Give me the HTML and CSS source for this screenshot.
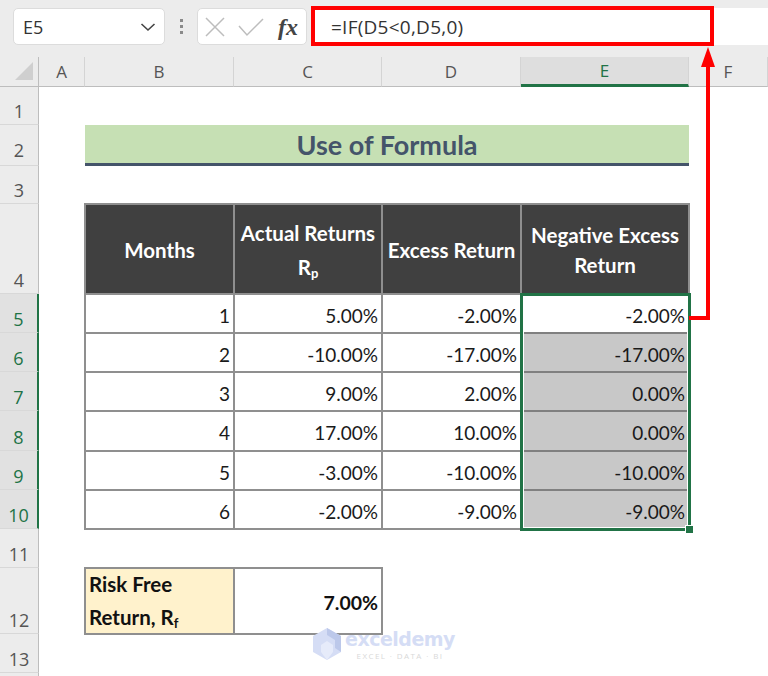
FILE: index.html
```html
<!DOCTYPE html>
<html lang="en">
<head>
<meta charset="utf-8">
<title>Use of Formula</title>
<link rel="stylesheet" href="styles.css">
</head>
<body>
<div class="page">
  <header class="formula-row">
    <div class="name-box"><span>E5</span>
      <svg class="chevron" width="16" height="10" viewBox="0 0 16 10"><path d="M1.5 2 L8 8 L14.5 2" fill="none" stroke="#444" stroke-width="1.6"/></svg>
    </div>
    <div class="dots"><i></i><i></i><i></i></div>
    <div class="fx-box">
      <svg width="20" height="20" viewBox="0 0 20 20"><path d="M1 1 L19 19 M19 1 L1 19" fill="none" stroke="#bdbdbd" stroke-width="1.5"/></svg>
      <svg width="26" height="20" viewBox="0 0 26 20"><path d="M1 9 L9 18 L25 2" fill="none" stroke="#bdbdbd" stroke-width="1.5"/></svg>
      <span class="fx">fx</span>
    </div>
    <div class="formula-input">=IF(D5&lt;0,D5,0)</div>
  </header>

  <main class="sheet">
    <div class="corner"><svg width="18" height="18" viewBox="0 0 18 18"><path d="M18 0 V18 H0 Z" fill="#cfcfcf"/></svg></div>
    <div class="col-head">A</div>
    <div class="col-head">B</div>
    <div class="col-head">C</div>
    <div class="col-head">D</div>
    <div class="col-head active">E</div>
    <div class="col-head">F</div>

    <div class="row-head">1</div>
    <div class="row-head raised">2</div>
    <div class="title">Use of Formula</div>
    <div class="row-head">3</div>

    <div class="row-head">4</div>
    <div class="cell th b">Months</div>
    <div class="cell th tall"><span>Actual Returns</span><span>R<sub>p</sub></span></div>
    <div class="cell th">Excess Return</div>
    <div class="cell th"><span>Negative Excess</span><span>Return</span></div>

    <div class="row-head sel">5</div>
    <div class="cell b">1</div><div class="cell">5.00%</div><div class="cell">-2.00%</div><div class="cell first">-2.00%</div>
    <div class="row-head sel">6</div>
    <div class="cell b">2</div><div class="cell">-10.00%</div><div class="cell">-17.00%</div><div class="cell shade">-17.00%</div>
    <div class="row-head sel">7</div>
    <div class="cell b">3</div><div class="cell">9.00%</div><div class="cell">2.00%</div><div class="cell shade">0.00%</div>
    <div class="row-head sel">8</div>
    <div class="cell b">4</div><div class="cell">17.00%</div><div class="cell">10.00%</div><div class="cell shade">0.00%</div>
    <div class="row-head sel">9</div>
    <div class="cell b">5</div><div class="cell">-3.00%</div><div class="cell">-10.00%</div><div class="cell shade">-10.00%</div>
    <div class="row-head sel">10</div>
    <div class="cell b">6</div><div class="cell">-2.00%</div><div class="cell">-9.00%</div><div class="cell shade">-9.00%</div>

    <div class="row-head">11</div>
    <div class="row-head">12</div>
    <div class="cell b label"><span>Risk Free</span><span>Return, R<sub>f</sub></span></div>
    <div class="cell strong">7.00%</div>
    <div class="row-head">13</div>
    <div class="row-head"></div>

    <div class="selection"></div>
    <div class="fill-handle"></div>
  </main>

  <div class="red-box"></div>
  <svg class="callout" width="30" height="290" viewBox="0 0 30 290">
    <path d="M0 272 H19 V20" fill="none" stroke="#ff0000" stroke-width="4"/>
    <path d="M19 1 L26 21 H12 Z" fill="#ff0000"/>
  </svg>

  <div class="watermark">
    <svg width="28" height="32" viewBox="0 0 28 32">
      <path d="M14 0 L28 8 V24 L14 32 L0 24 V8 Z" fill="#d5ddf5"/>
      <path d="M14 0 L28 8 V24 L22 20 V12 L14 7 Z" fill="#bcc8ea"/>
      <path d="M14 13 L20 17 V24 L14 32 L8 24 V17 Z" fill="#e6ebfa"/>
    </svg>
    <div class="wm-text"><span class="wm-name">exceldemy</span><span class="wm-sub">EXCEL · DATA · BI</span></div>
  </div>
</div>
</body>
</html>
```
FILE: styles.css
```css
* { box-sizing: border-box; }
html, body { margin: 0; padding: 0; }
body { width: 768px; height: 676px; overflow: hidden; background: #fff; }
.page { position: relative; width: 768px; height: 676px; overflow: hidden; background: #e9e9e9; }

.formula-row { height: 57px; display: flex; align-items: flex-start; padding: 8px 0 0 13px; background: #ececec; }
.name-box { width: 152px; height: 37px; display: flex; align-items: center; justify-content: space-between; padding: 0 8px 0 9px; background: #fff; border: 1px solid #dcdcdc; border-radius: 5px; font: 18px "Open Sans", sans-serif; color: #333; }
.dots { width: 32px; height: 37px; display: flex; flex-direction: column; align-items: center; justify-content: center; gap: 3px; }
.dots i { width: 3px; height: 3px; background: #8a8a8a; }
.fx-box { width: 110px; height: 37px; display: flex; align-items: center; gap: 13px; padding: 0 6px 0 7px; background: #fff; border: 1px solid #dcdcdc; border-radius: 5px; }
.fx { font: italic bold 24px "Liberation Serif", serif; color: #444; line-height: 1; margin-left: 1px; }
.formula-input { flex: 1; height: 37px; margin-left: 6px; padding: 0 0 0 18px; display: flex; align-items: center; background: #fff; font: 19px "Open Sans", sans-serif; letter-spacing: 0.25px; color: #333; }

.sheet { position: relative; display: grid; grid-template-columns: 39px 46px 149px 148px 139px 168px 79px; grid-template-rows: 30px 38px 41px 38px 90px 39px 39px 39px 40px 39px 39px 39px 66px 39px 39px; background: #fff; font: 19px Lato, sans-serif; color: #1a1a1a; }

.corner { background: #ececec; border-right: 1px solid #bdbdbd; border-bottom: 1px solid #bdbdbd; display: flex; align-items: flex-end; justify-content: flex-end; padding: 0 5px 6px 0; }
.col-head { background: #ececec; border-right: 1px solid #d4d4d4; border-bottom: 1px solid #bdbdbd; display: flex; align-items: center; justify-content: center; font: 17px "Open Sans", sans-serif; color: #555; }
.col-head.active { background: #dedede; border-bottom: 3px solid #217346; color: #217346; }

.row-head { grid-column: 1; background: #ececec; border-right: 1px solid #bdbdbd; border-bottom: 1px solid #d8d8d8; display: flex; align-items: flex-end; justify-content: center; padding-bottom: 1px; font: 18px "Open Sans", sans-serif; color: #555; }
.row-head.raised { padding-bottom: 3px; }
.row-head.sel { background: #e1e1e1; border-right: 2px solid #217346; color: #217346; }

.title { grid-column: 3 / 7; background: #c6e0b4; border-bottom: 3px solid #44546a; display: flex; align-items: center; justify-content: center; padding-top: 1px; font: bold 27px Lato, sans-serif; color: #44546a; }

.cell { border: 2px solid #8f8f8f; margin: -1px; padding: 3px 3px 0; display: flex; align-items: center; justify-content: flex-end; }
.b { grid-column: 3; }
.th { flex-direction: column; justify-content: center; gap: 7px; padding: 2px 0 0; text-align: center; align-items: center; background: #404040; color: #fff; font-size: 20.5px; font-weight: 700; }
.th span { display: block; line-height: 23px; }
.tall { gap: 11px; }
sub { font-size: 13px; line-height: 0; vertical-align: -3px; }
.first { background: #fff; }
.shade { background: #c8c8c8; border-color: #808080; }
.label { background: #fff2cc; flex-direction: column; align-items: flex-start; justify-content: center; gap: 10px; padding: 0 3px; font-size: 20.5px; font-weight: 700; color: #111; }
.label span { display: block; line-height: 23px; }
.strong { font-size: 19.5px; font-weight: 700; color: #111; }

.selection { position: absolute; left: 520px; top: 236px; width: 171px; height: 238px; border: 3px solid #217346; box-shadow: inset 0 0 0 1px #fff; pointer-events: none; }
.fill-handle { position: absolute; left: 685px; top: 468px; width: 9px; height: 9px; background: #217346; border: 1px solid #fff; }

.red-box { position: absolute; left: 311px; top: 6px; width: 403px; height: 40px; border: 4px solid #ff0000; }
.callout { position: absolute; left: 689px; top: 46px; }

.watermark { position: absolute; left: 313px; top: 628px; display: flex; gap: 4px; align-items: flex-start; }
.wm-text { display: flex; flex-direction: column; align-items: center; gap: 0; }
.wm-name { font: bold 19px/23px "DejaVu Sans", sans-serif; letter-spacing: -0.5px; color: #d5ddf5; }
.wm-sub { font: 8px/10px "Open Sans", sans-serif; letter-spacing: 1.4px; color: #d9d9d9; }
```
